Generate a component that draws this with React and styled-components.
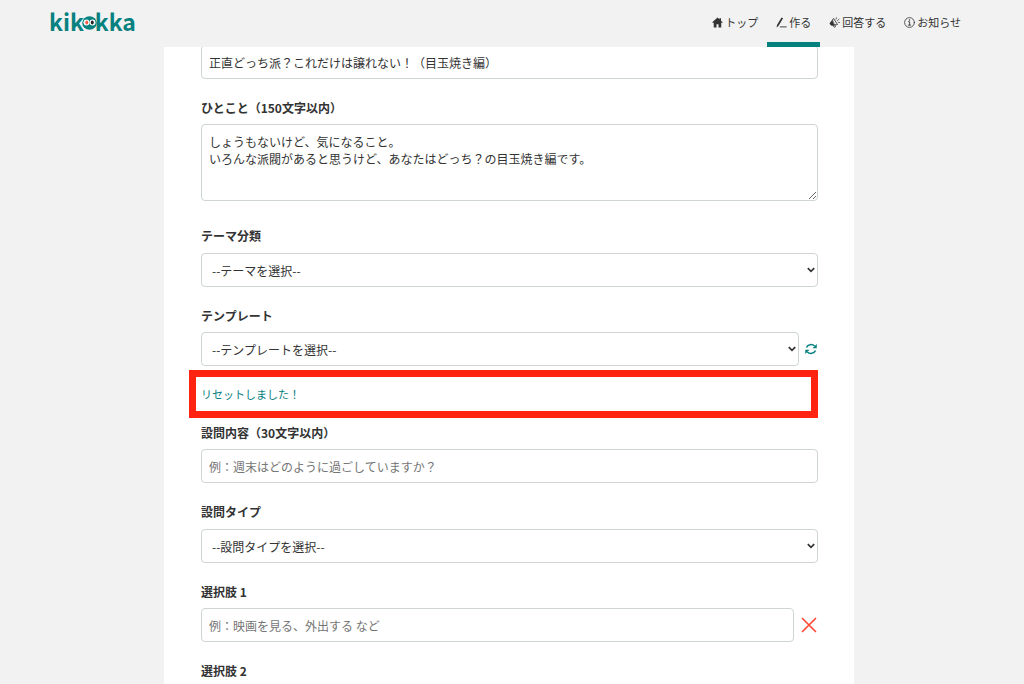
import React from "react";
import styled, { createGlobalStyle } from "styled-components";

const teal = "#078080";

const GlobalStyle = createGlobalStyle`
  *, *::before, *::after { box-sizing: border-box; }
  body {
    margin: 0;
    background: #f2f2f2;
    color: #333;
    font-family: "Noto Sans CJK JP", sans-serif;
    font-size: 12px;
  }
  input, select, textarea, button { font-family: inherit; color: inherit; }
`;

const Page = styled.div`
  display: flex;
  flex-direction: column;
  height: 100vh;
`;

const Header = styled.header`
  flex: none;
  display: flex;
  justify-content: space-between;
  height: 47px;
  padding: 0 54px 0 49px;
`;

const Logo = styled.a`
  display: flex;
  align-items: center;
  height: 42px;
  color: ${teal};
  font-size: 23px;
  font-weight: 700;
  line-height: 42px;
  text-decoration: none;
`;

const Face = styled.svg`
  width: 15px;
  height: 14px;
  margin: 4px -2px 0;
`;

const Nav = styled.nav`
  display: flex;
`;

const NavLink = styled.a`
  display: flex;
  align-items: center;
  gap: 2px;
  padding: 2px 9px 0;
  border-bottom: 5px solid ${(p) => (p.$active ? teal : "transparent")};
  color: #333;
  font-size: 11px;
  text-decoration: none;
  white-space: nowrap;
`;

const Icon = styled.svg`
  flex: none;
  width: ${(p) => p.$size || 11}px;
  height: ${(p) => p.$size || 11}px;
  fill: none;
  stroke: currentColor;
  stroke-linecap: round;
  stroke-linejoin: round;
`;

const Scroller = styled.main`
  flex: 1;
  min-height: 0;
  overflow-y: auto;
  scrollbar-width: none;
  padding-right: 6px;
`;

const Card = styled.form`
  max-width: 690px;
  min-height: 100%;
  margin: -2px auto 0;
  padding: 0 36px 36px 37px;
  background: #fff;
`;

const Field = styled.div`
  display: flex;
  flex-direction: column;
  gap: ${(p) => (p.$roomy ? 8 : 7)}px;
  margin-top: ${(p) => (p.$tight ? 6 : 20)}px;

  &:first-child { margin-top: 0; }
`;

const Label = styled.label`
  font-weight: 700;
  line-height: 18px;
`;

const Row = styled.div`
  display: flex;
  align-items: center;
  gap: ${(p) => p.$gap}px;
`;

const Input = styled.input`
  flex: 1;
  min-width: 0;
  width: 100%;
  min-height: 34px;
  padding: 0 7px;
  border: 1px solid #ced4d6;
  border-radius: 4px;
  background: #fff;
  font-size: 12px;

  &::placeholder { color: #757575; opacity: 1; }
`;

const TextArea = styled.textarea`
  display: block;
  width: 100%;
  height: 77px;
  margin-bottom: 6px;
  padding: 8px 7px;
  border: 1px solid #ced4d6;
  border-radius: 4px;
  background: #fff;
  font-size: 12px;
  line-height: 17px;
  resize: vertical;
`;

const SelectBox = styled.div`
  position: relative;
  flex: 1;
  min-width: 0;
`;

const SelectControl = styled.select`
  display: block;
  appearance: none;
  width: 100%;
  height: 34px;
  padding: 1px 20px 0 10px;
  border: 1px solid #ced4d6;
  border-radius: 4px;
  background: #fff;
  font-size: 12px;
`;

const Chevron = styled.svg`
  position: absolute;
  top: 13px;
  right: 3px;
  width: 8px;
  height: 8px;
  fill: none;
  stroke: #333;
  stroke-width: 1.7;
  pointer-events: none;
`;

const IconButton = styled.button`
  display: flex;
  padding: 0 1px 0 0;
  border: 0;
  background: none;
  color: ${(p) => p.$color};
`;

const Notice = styled.p`
  margin: 4px 0 0 -12px;
  padding: 8px 5px;
  border: 7px solid #ff2412;
  color: ${teal};
  font-size: 11px;
  line-height: 18px;
`;

function Select({ id, children }) {
  return (
    <SelectBox>
      <SelectControl id={id}>
        <option>{children}</option>
      </SelectControl>
      <Chevron viewBox="0 0 8 8" aria-hidden="true">
        <path d="M0.8 2.2 4 5.4 7.2 2.2" />
      </Chevron>
    </SelectBox>
  );
}

function HomeIcon() {
  return (
    <Icon viewBox="0 0 22 22" aria-hidden="true">
      <path d="M11 1 0.5 10.5 2 12.2 3.5 11V21H9V14.5H13V21H18.5V11L20 12.2 21.5 10.5 18 7.3V2.5H15V4.6Z" fill="currentColor" stroke="none" />
    </Icon>
  );
}

function PenIcon() {
  return (
    <Icon viewBox="0 0 22 22" aria-hidden="true">
      <path d="M11 1 14.2 2.6 5.2 17.5 1.2 20.8 2 15.8Z" fill="currentColor" stroke="none" />
      <path d="M8.5 19.8H20.5" strokeWidth="1.8" />
    </Icon>
  );
}

function HornIcon() {
  return (
    <Icon viewBox="0 0 22 22" aria-hidden="true">
      <path d="M9.5 3.5 17 15 7.5 16.5 3.8 15.8 2.2 12.3 4 10Z" strokeWidth="1.7" />
      <path d="M7 7 4 10 2.2 12.3 3.8 15.8 7.5 16.5 10.5 16Z" fill="currentColor" />
      <path d="M8.5 17.5 10.2 20.5 13 19.5 12.5 16.5M14 4.5 15 1.5M17 7 20 4.5M18.5 10.5 21 11" strokeWidth="1.5" />
    </Icon>
  );
}

function InfoIcon() {
  return (
    <Icon viewBox="0 0 22 22" aria-hidden="true">
      <circle cx="11" cy="11" r="9.8" strokeWidth="1.6" />
      <circle cx="11" cy="6" r="1.4" fill="currentColor" stroke="none" />
      <path d="M9 9.5H11.3V16M8.8 16.2H13.4" strokeWidth="1.7" />
    </Icon>
  );
}

function RefreshIcon() {
  return (
    <Icon $size={12} viewBox="0 0 24 24" aria-hidden="true">
      <path d="M3 9C5.5 2.5 14.5 1.2 19.2 6.2M21 15C18.5 21.5 9.5 22.8 4.8 17.8" strokeWidth="3" strokeLinecap="butt" />
      <path d="M23.5 2V10.5H15ZM0.5 22V13.5H9Z" fill="currentColor" stroke="none" />
    </Icon>
  );
}

function CrossIcon() {
  return (
    <Icon $size={16} viewBox="0 0 16 16" aria-hidden="true">
      <path d="M1.5 1.5 14.5 14.5M14.5 1.5 1.5 14.5" strokeWidth="1.7" />
    </Icon>
  );
}

const navItems = [
  { text: "トップ", icon: HomeIcon },
  { text: "作る", icon: PenIcon, active: true },
  { text: "回答する", icon: HornIcon },
  { text: "お知らせ", icon: InfoIcon },
];

export default function App() {
  return (
    <Page>
      <GlobalStyle />
      <Header>
        <Logo href="#">
          <span>kik</span>
          <Face viewBox="0 0 30 28" aria-hidden="true">
            <ellipse cx="15" cy="14" rx="14.5" ry="13.5" fill={teal} />
            <circle cx="9" cy="13" r="6" fill="#fff" />
            <circle cx="21" cy="13" r="6" fill="#fff" />
            <ellipse cx="9.5" cy="13" rx="3" ry="3.8" fill="#f45d48" />
            <ellipse cx="20.5" cy="13" rx="3" ry="3.8" fill="#232323" />
          </Face>
          <span>kka</span>
        </Logo>
        <Nav>
          {navItems.map(({ text, icon: Glyph, active }) => (
            <NavLink key={text} href="#" $active={active}>
              <Glyph />
              {text}
            </NavLink>
          ))}
        </Nav>
      </Header>
      <Scroller>
        <Card>
          <Field>
            <Input aria-label="タイトル" defaultValue="正直どっち派？これだけは譲れない！（目玉焼き編）" />
          </Field>
          <Field>
            <Label htmlFor="comment">ひとこと（150文字以内）</Label>
            <TextArea
              id="comment"
              defaultValue={"しょうもないけど、気になること。\nいろんな派閥があると思うけど、あなたはどっち？の目玉焼き編です。"}
            />
          </Field>
          <Field $roomy>
            <Label htmlFor="theme">テーマ分類</Label>
            <Select id="theme">--テーマを選択--</Select>
          </Field>
          <Field>
            <Label htmlFor="template">テンプレート</Label>
            <Row $gap={6}>
              <Select id="template">--テンプレートを選択--</Select>
              <IconButton type="button" aria-label="リセット" $color={teal}>
                <RefreshIcon />
              </IconButton>
            </Row>
          </Field>
          <Notice role="status">リセットしました！</Notice>
          <Field $tight>
            <Label htmlFor="question">設問内容（30文字以内）</Label>
            <Input id="question" placeholder="例：週末はどのように過ごしていますか？" />
          </Field>
          <Field $roomy>
            <Label htmlFor="type">設問タイプ</Label>
            <Select id="type">--設問タイプを選択--</Select>
          </Field>
          <Field>
            <Label htmlFor="choice1">選択肢 1</Label>
            <Row $gap={7}>
              <Input id="choice1" placeholder="例：映画を見る、外出する など" />
              <IconButton type="button" aria-label="削除" $color="#ff4a36">
                <CrossIcon />
              </IconButton>
            </Row>
          </Field>
          <Field>
            <Label htmlFor="choice2">選択肢 2</Label>
            <Input id="choice2" />
          </Field>
        </Card>
      </Scroller>
    </Page>
  );
}
